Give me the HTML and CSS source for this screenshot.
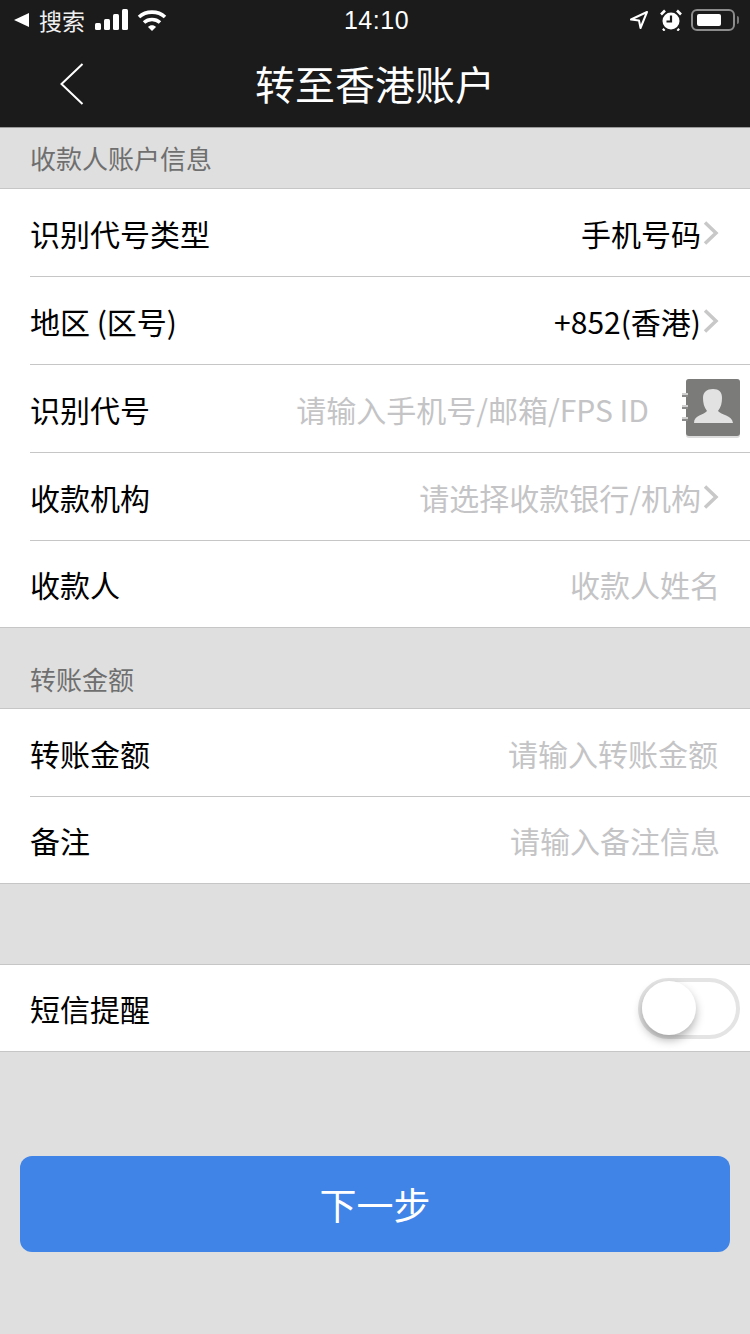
FILE: index.html
```html
<!DOCTYPE html>
<html lang="zh-CN">

<head>
    <meta charset="UTF-8">
    <meta name="viewport" content="width=device-width, initial-scale=1.0">
    <title>转至香港账户</title>
    <link rel="stylesheet" href="styles.css">
</head>

<body>
    <header class="topo">
        <div class="status">
            <div class="status-lado">
                <svg class="voltar-mini" width="16" height="14" viewBox="0 0 16 14"><path d="M0 7 15 0V14Z" fill="#fff"/></svg>
                <span class="status-app">搜索</span>
                <svg class="sinal" width="34" height="22" viewBox="0 0 34 22" fill="#fff">
                    <rect x="0" y="14" width="6" height="7" rx="1.5"/>
                    <rect x="9" y="10" width="6" height="11" rx="1.5"/>
                    <rect x="18" y="5" width="6" height="16" rx="1.5"/>
                    <rect x="27" y="0" width="6" height="21" rx="1.5"/>
                </svg>
                <svg class="wifi" width="30" height="22" viewBox="0 0 30 22" fill="none" stroke="#fff" stroke-width="3.6">
                    <path d="M2 8C9 1.500 21 1.500 28 8"/>
                    <path d="M7 13.500C11.500 9.500 18.500 9.500 23 13.500"/>
                    <path d="M11 18 15 22 19 18C17 15.700 13 15.700 11 18Z" fill="#fff" stroke="none"/>
                </svg>
            </div>
            <div class="status-hora">14:10</div>
            <div class="status-lado status-direita">
                <svg width="20" height="20" viewBox="0 0 20 20" fill="none" stroke="#fff" stroke-width="2" stroke-linejoin="round"><path d="M18 2 2 9.500 10 10.500 11.500 18Z"/></svg>
                <svg class="alarme" width="22" height="22" viewBox="0 0 22 22">
                    <circle cx="11" cy="12" r="8.500" fill="#fff"/>
                    <path d="M11 6.500V12.500H6.500" fill="none" stroke="#1a1a1a" stroke-width="2.200"/>
                    <path d="M1 5.500 5 1.500M21 5.500 17 1.500M4.500 20 3 21.500M17.500 20 19 21.500" stroke="#fff" stroke-width="2.600"/>
                </svg>
                <div class="bateria"><div class="bateria-carga"></div></div>
                <div class="bateria-ponta"></div>
            </div>
        </div>
        <div class="nav">
            <svg class="voltar" width="24" height="42" viewBox="0 0 24 42" fill="none" stroke="#fff" stroke-width="2"><path d="M22.500 1 1.500 21 22.500 41"/></svg>
            <h1 class="titulo">转至香港账户</h1>
        </div>
    </header>

    <div class="secao-titulo secao-primeira">收款人账户信息</div>
    <div class="grupo">
        <div class="linha">
            <span class="rotulo">识别代号类型</span>
            <span class="valor">手机号码</span>
            <svg class="seta" width="16" height="24" viewBox="0 0 16 24" fill="none" stroke="#c8c8c8" stroke-width="3.500"><path d="M2 1.500 13 12 2 22.500"/></svg>
        </div>
        <div class="linha">
            <span class="rotulo">地区 (区号)</span>
            <span class="valor">+852(香港)</span>
            <svg class="seta" width="16" height="24" viewBox="0 0 16 24" fill="none" stroke="#c8c8c8" stroke-width="3.500"><path d="M2 1.500 13 12 2 22.500"/></svg>
        </div>
        <div class="linha">
            <span class="rotulo">识别代号</span>
            <span class="valor vazio">请输入手机号/邮箱/FPS ID</span>
            <svg class="agenda" width="60" height="60" viewBox="0 0 60 60">
                <rect x="6" y="0" width="54" height="59" rx="3" fill="#dcdcdc"/>
                <rect x="6" y="0" width="54" height="57" rx="3" fill="#7b7b7a"/>
                <g fill="none" stroke="#8a8a8a" stroke-width="4"><path d="M2 16H8M2 28H8M2 40H8"/></g>
                <g fill="none" stroke="#e6e6e6" stroke-width="1.500"><path d="M2 15H8M2 27H8M2 39H8"/></g>
                <path d="M14 44C14 36 24 36 27 32 24 28 23 24 23 19 23 13 27 10 33 10 39 10 42 13 42 19 42 24 41 28 38 32 41 36 52 36 53 44Z" fill="#e2e2e2"/>
            </svg>
        </div>
        <div class="linha">
            <span class="rotulo">收款机构</span>
            <span class="valor vazio">请选择收款银行/机构</span>
            <svg class="seta" width="16" height="24" viewBox="0 0 16 24" fill="none" stroke="#c8c8c8" stroke-width="3.500"><path d="M2 1.500 13 12 2 22.500"/></svg>
        </div>
        <div class="linha linha-fim">
            <span class="rotulo">收款人</span>
            <span class="valor vazio">收款人姓名</span>
        </div>
    </div>

    <div class="secao-titulo">转账金额</div>
    <div class="grupo">
        <div class="linha">
            <span class="rotulo">转账金额</span>
            <span class="valor vazio">请输入转账金额</span>
        </div>
        <div class="linha linha-fim">
            <span class="rotulo">备注</span>
            <span class="valor vazio">请输入备注信息</span>
        </div>
    </div>

    <div class="grupo grupo-sms">
        <div class="linha linha-fim">
            <span class="rotulo">短信提醒</span>
            <div class="chave"><div class="chave-botao"></div></div>
        </div>
    </div>

    <button class="proximo">下一步</button>
</body>

</html>
```

FILE: styles.css
```css
html {
    background-color: #dfdfdf;
}

body {
    margin: 0;
    height: 1334px;
    overflow: hidden;
    background-color: #dfdfdf;
    font-family: "Noto Sans CJK SC", "Liberation Sans", sans-serif;
    color: #000;
}

.topo {
    height: 128px;
    box-sizing: border-box;
    background-color: #1b1b1c;
    border-bottom: 1px solid #9a9a9a;
    color: #fff;
}

.status {
    height: 40px;
    display: grid;
    grid-template-columns: 1fr auto 1fr;
    align-items: center;
    padding: 0 11px 0 14px;
}

.status-lado {
    display: flex;
    align-items: center;
}

.status-direita {
    justify-content: flex-end;
}

.status-app {
    font-size: 23px;
    line-height: 40px;
    margin: 0 10px 0 9px;
    color: #f0f0f0;
}

.wifi {
    margin-left: 8px;
}

.status-hora {
    font-family: "Liberation Sans", sans-serif;
    font-size: 25px;
    letter-spacing: 0.5px;
}

.alarme {
    margin: 0 9px 0 11px;
}

.bateria {
    width: 44px;
    height: 22px;
    box-sizing: border-box;
    border: 2px solid #8c8c8c;
    border-radius: 6px;
    padding: 3px 4px;
}

.bateria-carga {
    width: 24px;
    height: 12px;
    background-color: #fff;
    border-radius: 2px;
}

.bateria-ponta {
    width: 2px;
    height: 8px;
    margin-left: 2px;
    background-color: #777;
    border-radius: 0 2px 2px 0;
}

.nav {
    height: 87px;
    display: flex;
    align-items: center;
    justify-content: center;
    position: relative;
}

.voltar {
    position: absolute;
    left: 60px;
    top: 23px;
}

.titulo {
    margin: 0;
    font-size: 40px;
    font-weight: 400;
    line-height: 87px;
}

.secao-titulo {
    height: 80px;
    box-sizing: border-box;
    padding: 32px 0 0 30px;
    font-size: 26px;
    line-height: 38px;
    color: #6f6f6f;
}

.secao-primeira {
    height: 60px;
    padding-top: 11px;
}

.grupo {
    background-color: #fff;
    border-top: 1px solid #c6c6c6;
    border-bottom: 1px solid #c6c6c6;
    padding-left: 30px;
}

.grupo-sms {
    margin-top: 80px;
}

.linha {
    height: 87px;
    display: flex;
    align-items: center;
    border-bottom: 1px solid #c6c6c6;
    font-size: 30px;
    padding-right: 32px;
}

.grupo .linha-fim {
    height: 86px;
    border-bottom: none;
}

.rotulo {
    flex: 1;
}

.valor {
    white-space: nowrap;
}

.vazio {
    color: #c4c4c6;
}

.seta {
    margin: 0 0 0 2px;
}

.linha .seta {
    margin-right: -1px;
}

.linha-fim .valor {
    margin-right: -2px;
}

.agenda {
    margin: 0 -22px 0 31px;
}

.chave {
    width: 102px;
    height: 61px;
    box-sizing: border-box;
    margin-right: -22px;
    border: 4px solid #e4e4e4;
    border-radius: 31px;
    display: flex;
    align-items: center;
}

.chave-botao {
    width: 54px;
    height: 54px;
    margin-left: 0;
    background-color: #fff;
    border-radius: 50%;
    box-shadow: 0 5px 10px rgba(0, 0, 0, 0.3);
}

.proximo {
    display: block;
    width: 710px;
    height: 96px;
    margin: 104px 0 0 20px;
    border: none;
    border-radius: 12px;
    background-color: #4084e8;
    color: #fff;
    font-family: inherit;
    font-size: 37px;
}
```
